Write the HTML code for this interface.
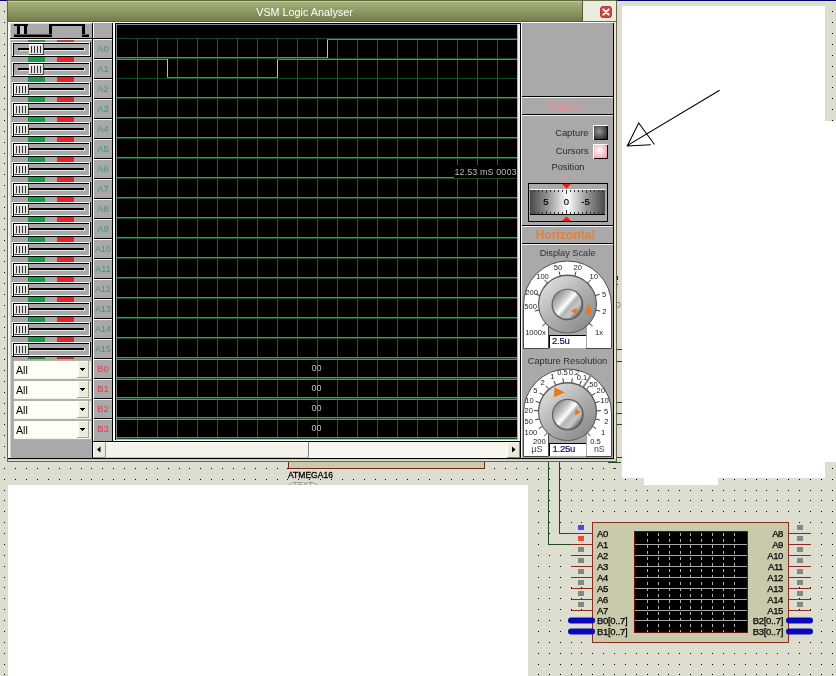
<!DOCTYPE html>
<html><head><meta charset="utf-8"><title>VSM Logic Analyser</title>
<style>
html,body{margin:0;padding:0;width:836px;height:676px;overflow:hidden;background:#DDDECF;}
svg{will-change:transform;display:block;position:absolute;left:0;top:0;font-family:"Liberation Sans",sans-serif;}
rect{shape-rendering:crispEdges}
</style></head><body>
<svg width="836" height="676" viewBox="0 0 836 676">
<path d="M4 11.5h1M832 11.5h1M4 22.5h1M832 22.5h1M4 33.5h1M832 33.5h1M4 44.5h1M832 44.5h1M4 55.5h1M832 55.5h1M4 66.5h1M832 66.5h1M4 76.5h1M832 76.5h1M4 87.5h1M832 87.5h1M4 98.5h1M832 98.5h1M4 109.5h1M832 109.5h1M4 120.5h1M832 120.5h1M4 131.5h1M832 131.5h1M4 142.5h1M832 142.5h1M4 153.5h1M832 153.5h1M4 163.5h1M832 163.5h1M4 174.5h1M832 174.5h1M4 185.5h1M832 185.5h1M4 196.5h1M832 196.5h1M4 207.5h1M832 207.5h1M4 218.5h1M832 218.5h1M4 229.5h1M832 229.5h1M4 240.5h1M832 240.5h1M4 250.5h1M832 250.5h1M4 261.5h1M832 261.5h1M4 272.5h1M832 272.5h1M4 283.5h1M832 283.5h1M4 294.5h1M832 294.5h1M4 305.5h1M832 305.5h1M4 316.5h1M832 316.5h1M4 327.5h1M832 327.5h1M4 337.5h1M832 337.5h1M4 348.5h1M832 348.5h1M4 359.5h1M832 359.5h1M4 370.5h1M832 370.5h1M4 381.5h1M832 381.5h1M4 392.5h1M832 392.5h1M4 403.5h1M832 403.5h1M4 413.5h1M832 413.5h1M4 424.5h1M832 424.5h1M4 435.5h1M832 435.5h1M4 446.5h1M832 446.5h1M4 457.5h1M832 457.5h1M4 468.5h1M15 468.5h1M26 468.5h1M37 468.5h1M48 468.5h1M59 468.5h1M70 468.5h1M81 468.5h1M91 468.5h1M102 468.5h1M113 468.5h1M124 468.5h1M135 468.5h1M146 468.5h1M157 468.5h1M168 468.5h1M179 468.5h1M189 468.5h1M200 468.5h1M211 468.5h1M222 468.5h1M233 468.5h1M244 468.5h1M255 468.5h1M266 468.5h1M277 468.5h1M287 468.5h1M298 468.5h1M309 468.5h1M320 468.5h1M331 468.5h1M342 468.5h1M353 468.5h1M364 468.5h1M375 468.5h1M385 468.5h1M396 468.5h1M407 468.5h1M418 468.5h1M429 468.5h1M440 468.5h1M451 468.5h1M462 468.5h1M473 468.5h1M483 468.5h1M494 468.5h1M505 468.5h1M516 468.5h1M527 468.5h1M538 468.5h1M549 468.5h1M560 468.5h1M571 468.5h1M581 468.5h1M592 468.5h1M603 468.5h1M614 468.5h1M832 468.5h1M4 479.5h1M15 479.5h1M26 479.5h1M37 479.5h1M48 479.5h1M59 479.5h1M70 479.5h1M81 479.5h1M91 479.5h1M102 479.5h1M113 479.5h1M124 479.5h1M135 479.5h1M146 479.5h1M157 479.5h1M168 479.5h1M179 479.5h1M189 479.5h1M200 479.5h1M211 479.5h1M222 479.5h1M233 479.5h1M244 479.5h1M255 479.5h1M266 479.5h1M277 479.5h1M287 479.5h1M298 479.5h1M309 479.5h1M320 479.5h1M331 479.5h1M342 479.5h1M353 479.5h1M364 479.5h1M375 479.5h1M385 479.5h1M396 479.5h1M407 479.5h1M418 479.5h1M429 479.5h1M440 479.5h1M451 479.5h1M462 479.5h1M473 479.5h1M483 479.5h1M494 479.5h1M505 479.5h1M516 479.5h1M527 479.5h1M538 479.5h1M549 479.5h1M560 479.5h1M571 479.5h1M581 479.5h1M592 479.5h1M603 479.5h1M614 479.5h1M625 479.5h1M636 479.5h1M647 479.5h1M658 479.5h1M668 479.5h1M679 479.5h1M690 479.5h1M701 479.5h1M712 479.5h1M723 479.5h1M734 479.5h1M745 479.5h1M756 479.5h1M766 479.5h1M777 479.5h1M788 479.5h1M799 479.5h1M810 479.5h1M821 479.5h1M832 479.5h1M4 490.5h1M538 490.5h1M549 490.5h1M560 490.5h1M571 490.5h1M581 490.5h1M592 490.5h1M603 490.5h1M614 490.5h1M625 490.5h1M636 490.5h1M647 490.5h1M658 490.5h1M668 490.5h1M679 490.5h1M690 490.5h1M701 490.5h1M712 490.5h1M723 490.5h1M734 490.5h1M745 490.5h1M756 490.5h1M766 490.5h1M777 490.5h1M788 490.5h1M799 490.5h1M810 490.5h1M821 490.5h1M832 490.5h1M4 500.5h1M538 500.5h1M549 500.5h1M560 500.5h1M571 500.5h1M581 500.5h1M592 500.5h1M603 500.5h1M614 500.5h1M625 500.5h1M636 500.5h1M647 500.5h1M658 500.5h1M668 500.5h1M679 500.5h1M690 500.5h1M701 500.5h1M712 500.5h1M723 500.5h1M734 500.5h1M745 500.5h1M756 500.5h1M766 500.5h1M777 500.5h1M788 500.5h1M799 500.5h1M810 500.5h1M821 500.5h1M832 500.5h1M4 511.5h1M538 511.5h1M549 511.5h1M560 511.5h1M571 511.5h1M581 511.5h1M592 511.5h1M603 511.5h1M614 511.5h1M625 511.5h1M636 511.5h1M647 511.5h1M658 511.5h1M668 511.5h1M679 511.5h1M690 511.5h1M701 511.5h1M712 511.5h1M723 511.5h1M734 511.5h1M745 511.5h1M756 511.5h1M766 511.5h1M777 511.5h1M788 511.5h1M799 511.5h1M810 511.5h1M821 511.5h1M832 511.5h1M4 522.5h1M538 522.5h1M549 522.5h1M560 522.5h1M571 522.5h1M581 522.5h1M592 522.5h1M603 522.5h1M614 522.5h1M625 522.5h1M636 522.5h1M647 522.5h1M658 522.5h1M668 522.5h1M679 522.5h1M690 522.5h1M701 522.5h1M712 522.5h1M723 522.5h1M734 522.5h1M745 522.5h1M756 522.5h1M766 522.5h1M777 522.5h1M788 522.5h1M799 522.5h1M810 522.5h1M821 522.5h1M832 522.5h1M4 533.5h1M538 533.5h1M549 533.5h1M560 533.5h1M571 533.5h1M581 533.5h1M592 533.5h1M603 533.5h1M614 533.5h1M625 533.5h1M636 533.5h1M647 533.5h1M658 533.5h1M668 533.5h1M679 533.5h1M690 533.5h1M701 533.5h1M712 533.5h1M723 533.5h1M734 533.5h1M745 533.5h1M756 533.5h1M766 533.5h1M777 533.5h1M788 533.5h1M799 533.5h1M810 533.5h1M821 533.5h1M832 533.5h1M4 544.5h1M538 544.5h1M549 544.5h1M560 544.5h1M571 544.5h1M581 544.5h1M592 544.5h1M603 544.5h1M614 544.5h1M625 544.5h1M636 544.5h1M647 544.5h1M658 544.5h1M668 544.5h1M679 544.5h1M690 544.5h1M701 544.5h1M712 544.5h1M723 544.5h1M734 544.5h1M745 544.5h1M756 544.5h1M766 544.5h1M777 544.5h1M788 544.5h1M799 544.5h1M810 544.5h1M821 544.5h1M832 544.5h1M4 555.5h1M538 555.5h1M549 555.5h1M560 555.5h1M571 555.5h1M581 555.5h1M592 555.5h1M603 555.5h1M614 555.5h1M625 555.5h1M636 555.5h1M647 555.5h1M658 555.5h1M668 555.5h1M679 555.5h1M690 555.5h1M701 555.5h1M712 555.5h1M723 555.5h1M734 555.5h1M745 555.5h1M756 555.5h1M766 555.5h1M777 555.5h1M788 555.5h1M799 555.5h1M810 555.5h1M821 555.5h1M832 555.5h1M4 566.5h1M538 566.5h1M549 566.5h1M560 566.5h1M571 566.5h1M581 566.5h1M592 566.5h1M603 566.5h1M614 566.5h1M625 566.5h1M636 566.5h1M647 566.5h1M658 566.5h1M668 566.5h1M679 566.5h1M690 566.5h1M701 566.5h1M712 566.5h1M723 566.5h1M734 566.5h1M745 566.5h1M756 566.5h1M766 566.5h1M777 566.5h1M788 566.5h1M799 566.5h1M810 566.5h1M821 566.5h1M832 566.5h1M4 577.5h1M538 577.5h1M549 577.5h1M560 577.5h1M571 577.5h1M581 577.5h1M592 577.5h1M603 577.5h1M614 577.5h1M625 577.5h1M636 577.5h1M647 577.5h1M658 577.5h1M668 577.5h1M679 577.5h1M690 577.5h1M701 577.5h1M712 577.5h1M723 577.5h1M734 577.5h1M745 577.5h1M756 577.5h1M766 577.5h1M777 577.5h1M788 577.5h1M799 577.5h1M810 577.5h1M821 577.5h1M832 577.5h1M4 587.5h1M538 587.5h1M549 587.5h1M560 587.5h1M571 587.5h1M581 587.5h1M592 587.5h1M603 587.5h1M614 587.5h1M625 587.5h1M636 587.5h1M647 587.5h1M658 587.5h1M668 587.5h1M679 587.5h1M690 587.5h1M701 587.5h1M712 587.5h1M723 587.5h1M734 587.5h1M745 587.5h1M756 587.5h1M766 587.5h1M777 587.5h1M788 587.5h1M799 587.5h1M810 587.5h1M821 587.5h1M832 587.5h1M4 598.5h1M538 598.5h1M549 598.5h1M560 598.5h1M571 598.5h1M581 598.5h1M592 598.5h1M603 598.5h1M614 598.5h1M625 598.5h1M636 598.5h1M647 598.5h1M658 598.5h1M668 598.5h1M679 598.5h1M690 598.5h1M701 598.5h1M712 598.5h1M723 598.5h1M734 598.5h1M745 598.5h1M756 598.5h1M766 598.5h1M777 598.5h1M788 598.5h1M799 598.5h1M810 598.5h1M821 598.5h1M832 598.5h1M4 609.5h1M538 609.5h1M549 609.5h1M560 609.5h1M571 609.5h1M581 609.5h1M592 609.5h1M603 609.5h1M614 609.5h1M625 609.5h1M636 609.5h1M647 609.5h1M658 609.5h1M668 609.5h1M679 609.5h1M690 609.5h1M701 609.5h1M712 609.5h1M723 609.5h1M734 609.5h1M745 609.5h1M756 609.5h1M766 609.5h1M777 609.5h1M788 609.5h1M799 609.5h1M810 609.5h1M821 609.5h1M832 609.5h1M4 620.5h1M538 620.5h1M549 620.5h1M560 620.5h1M571 620.5h1M581 620.5h1M592 620.5h1M603 620.5h1M614 620.5h1M625 620.5h1M636 620.5h1M647 620.5h1M658 620.5h1M668 620.5h1M679 620.5h1M690 620.5h1M701 620.5h1M712 620.5h1M723 620.5h1M734 620.5h1M745 620.5h1M756 620.5h1M766 620.5h1M777 620.5h1M788 620.5h1M799 620.5h1M810 620.5h1M821 620.5h1M832 620.5h1M4 631.5h1M538 631.5h1M549 631.5h1M560 631.5h1M571 631.5h1M581 631.5h1M592 631.5h1M603 631.5h1M614 631.5h1M625 631.5h1M636 631.5h1M647 631.5h1M658 631.5h1M668 631.5h1M679 631.5h1M690 631.5h1M701 631.5h1M712 631.5h1M723 631.5h1M734 631.5h1M745 631.5h1M756 631.5h1M766 631.5h1M777 631.5h1M788 631.5h1M799 631.5h1M810 631.5h1M821 631.5h1M832 631.5h1M4 642.5h1M538 642.5h1M549 642.5h1M560 642.5h1M571 642.5h1M581 642.5h1M592 642.5h1M603 642.5h1M614 642.5h1M625 642.5h1M636 642.5h1M647 642.5h1M658 642.5h1M668 642.5h1M679 642.5h1M690 642.5h1M701 642.5h1M712 642.5h1M723 642.5h1M734 642.5h1M745 642.5h1M756 642.5h1M766 642.5h1M777 642.5h1M788 642.5h1M799 642.5h1M810 642.5h1M821 642.5h1M832 642.5h1M4 653.5h1M538 653.5h1M549 653.5h1M560 653.5h1M571 653.5h1M581 653.5h1M592 653.5h1M603 653.5h1M614 653.5h1M625 653.5h1M636 653.5h1M647 653.5h1M658 653.5h1M668 653.5h1M679 653.5h1M690 653.5h1M701 653.5h1M712 653.5h1M723 653.5h1M734 653.5h1M745 653.5h1M756 653.5h1M766 653.5h1M777 653.5h1M788 653.5h1M799 653.5h1M810 653.5h1M821 653.5h1M832 653.5h1M4 664.5h1M538 664.5h1M549 664.5h1M560 664.5h1M571 664.5h1M581 664.5h1M592 664.5h1M603 664.5h1M614 664.5h1M625 664.5h1M636 664.5h1M647 664.5h1M658 664.5h1M668 664.5h1M679 664.5h1M690 664.5h1M701 664.5h1M712 664.5h1M723 664.5h1M734 664.5h1M745 664.5h1M756 664.5h1M766 664.5h1M777 664.5h1M788 664.5h1M799 664.5h1M810 664.5h1M821 664.5h1M832 664.5h1M4 674.5h1M538 674.5h1M549 674.5h1M560 674.5h1M571 674.5h1M581 674.5h1M592 674.5h1M603 674.5h1M614 674.5h1M625 674.5h1M636 674.5h1M647 674.5h1M658 674.5h1M668 674.5h1M679 674.5h1M690 674.5h1M701 674.5h1M712 674.5h1M723 674.5h1M734 674.5h1M745 674.5h1M756 674.5h1M766 674.5h1M777 674.5h1M788 674.5h1M799 674.5h1M810 674.5h1M821 674.5h1M832 674.5h1" stroke="#000" stroke-width="1" shape-rendering="crispEdges" fill="none"/>
<rect x="0" y="0" width="7" height="1" fill="#000068"/>
<rect x="0" y="1" width="7" height="1" fill="#D8D8FF"/>
<rect x="617" y="0" width="219" height="1" fill="#000068"/>
<rect x="617" y="1" width="219" height="1" fill="#DCDCFF"/>
<rect x="617" y="2" width="219" height="4" fill="#DCDFD0"/>
<rect x="288" y="440" width="197" height="29" fill="#7A2318"/>
<rect x="289" y="440" width="195" height="28" fill="#CACAAC"/>
<text x="288" y="478" font-size="9.3" fill="#000" stroke="#000" stroke-width="0.3" textLength="45" lengthAdjust="spacingAndGlyphs">ATMEGA16</text>
<text x="288" y="488" font-size="9" fill="#8A8A8A" textLength="30" lengthAdjust="spacingAndGlyphs">&lt;TEXT&gt;</text>
<rect x="548" y="462" width="1" height="83" fill="#1E4A1E"/>
<rect x="548" y="544" width="23" height="1" fill="#1E4A1E"/>
<rect x="559" y="462" width="1" height="72" fill="#1E4A1E"/>
<rect x="559" y="533" width="12" height="1" fill="#1E4A1E"/>
<rect x="608" y="462" width="13" height="1" fill="#1E4A1E"/>
<rect x="617" y="457" width="5" height="1" fill="#1E4A1E"/>
<rect x="617" y="402" width="5" height="1" fill="#1E4A1E"/>
<rect x="617" y="413" width="5" height="1" fill="#1E4A1E"/>
<rect x="617" y="424" width="5" height="1" fill="#1E4A1E"/>
<rect x="617" y="349" width="5" height="1" fill="#1E4A1E"/>
<rect x="617" y="361" width="5" height="1" fill="#1E4A1E"/>
<path d="M617 302.5H619.5Q621.5 304.7 619.5 307H617" stroke="#8A8A80" stroke-width="1" fill="none"/>
<rect x="613" y="468" width="3" height="1" fill="#333"/>
<rect x="617" y="276" width="1" height="4" fill="#222"/>
<rect x="617" y="284" width="1" height="1" fill="#222"/>
<rect x="592" y="522" width="197" height="121" fill="#8B2A20"/>
<rect x="593" y="523" width="195" height="119" fill="#C9C9AC"/>
<rect x="634" y="531" width="114" height="102" fill="#6A1010"/>
<rect x="635" y="532" width="112" height="100" fill="#000"/>
<rect x="635" y="544" width="112" height="1" fill="#A8A8A8"/>
<rect x="635" y="555" width="112" height="1" fill="#A8A8A8"/>
<rect x="635" y="566" width="112" height="1" fill="#A8A8A8"/>
<rect x="635" y="577" width="112" height="1" fill="#A8A8A8"/>
<rect x="635" y="588" width="112" height="1" fill="#A8A8A8"/>
<rect x="635" y="599" width="112" height="1" fill="#A8A8A8"/>
<rect x="635" y="610" width="112" height="1" fill="#A8A8A8"/>
<rect x="635" y="620" width="112" height="1" fill="#A8A8A8"/>
<path d="M647.5 533V632" stroke="#B0B0B0" stroke-width="1" stroke-dasharray="3 3.07" shape-rendering="crispEdges"/>
<path d="M658.5 533V632" stroke="#B0B0B0" stroke-width="1" stroke-dasharray="3 3.07" shape-rendering="crispEdges"/>
<path d="M669.5 533V632" stroke="#B0B0B0" stroke-width="1" stroke-dasharray="3 3.07" shape-rendering="crispEdges"/>
<path d="M680.5 533V632" stroke="#B0B0B0" stroke-width="1" stroke-dasharray="3 3.07" shape-rendering="crispEdges"/>
<path d="M690.5 533V632" stroke="#B0B0B0" stroke-width="1" stroke-dasharray="3 3.07" shape-rendering="crispEdges"/>
<path d="M701.5 533V632" stroke="#B0B0B0" stroke-width="1" stroke-dasharray="3 3.07" shape-rendering="crispEdges"/>
<path d="M712.5 533V632" stroke="#B0B0B0" stroke-width="1" stroke-dasharray="3 3.07" shape-rendering="crispEdges"/>
<path d="M723.5 533V632" stroke="#B0B0B0" stroke-width="1" stroke-dasharray="3 3.07" shape-rendering="crispEdges"/>
<path d="M734.5 533V632" stroke="#B0B0B0" stroke-width="1" stroke-dasharray="3 3.07" shape-rendering="crispEdges"/>
<rect x="571" y="533" width="21" height="1" fill="#8B2A20"/>
<rect x="789" y="533" width="22" height="1" fill="#8B2A20"/>
<rect x="578" y="525" width="6" height="5" fill="#4A4AF0"/>
<rect x="797" y="525" width="6" height="5" fill="#868686"/>
<text x="597" y="537" font-size="9.5" fill="#000" letter-spacing="-0.4" stroke="#000" stroke-width="0.25">A0</text>
<text x="783" y="537" font-size="9.5" fill="#000" text-anchor="end" letter-spacing="-0.4" stroke="#000" stroke-width="0.25">A8</text>
<rect x="571" y="544" width="21" height="1" fill="#8B2A20"/>
<rect x="789" y="544" width="22" height="1" fill="#8B2A20"/>
<rect x="578" y="536" width="6" height="5" fill="#F04A40"/>
<rect x="797" y="536" width="6" height="5" fill="#868686"/>
<text x="597" y="548" font-size="9.5" fill="#000" letter-spacing="-0.4" stroke="#000" stroke-width="0.25">A1</text>
<text x="783" y="548" font-size="9.5" fill="#000" text-anchor="end" letter-spacing="-0.4" stroke="#000" stroke-width="0.25">A9</text>
<rect x="571" y="555" width="21" height="1" fill="#8B2A20"/>
<rect x="789" y="555" width="22" height="1" fill="#8B2A20"/>
<rect x="578" y="547" width="6" height="5" fill="#868686"/>
<rect x="797" y="547" width="6" height="5" fill="#868686"/>
<text x="597" y="559" font-size="9.5" fill="#000" letter-spacing="-0.4" stroke="#000" stroke-width="0.25">A2</text>
<text x="783" y="559" font-size="9.5" fill="#000" text-anchor="end" letter-spacing="-0.4" stroke="#000" stroke-width="0.25">A10</text>
<rect x="571" y="566" width="21" height="1" fill="#8B2A20"/>
<rect x="789" y="566" width="22" height="1" fill="#8B2A20"/>
<rect x="578" y="558" width="6" height="5" fill="#868686"/>
<rect x="797" y="558" width="6" height="5" fill="#868686"/>
<text x="597" y="570" font-size="9.5" fill="#000" letter-spacing="-0.4" stroke="#000" stroke-width="0.25">A3</text>
<text x="783" y="570" font-size="9.5" fill="#000" text-anchor="end" letter-spacing="-0.4" stroke="#000" stroke-width="0.25">A11</text>
<rect x="571" y="577" width="21" height="1" fill="#8B2A20"/>
<rect x="789" y="577" width="22" height="1" fill="#8B2A20"/>
<rect x="578" y="569" width="6" height="5" fill="#868686"/>
<rect x="797" y="569" width="6" height="5" fill="#868686"/>
<text x="597" y="581" font-size="9.5" fill="#000" letter-spacing="-0.4" stroke="#000" stroke-width="0.25">A4</text>
<text x="783" y="581" font-size="9.5" fill="#000" text-anchor="end" letter-spacing="-0.4" stroke="#000" stroke-width="0.25">A12</text>
<rect x="571" y="588" width="21" height="1" fill="#8B2A20"/>
<rect x="789" y="588" width="22" height="1" fill="#8B2A20"/>
<rect x="578" y="580" width="6" height="5" fill="#868686"/>
<rect x="797" y="580" width="6" height="5" fill="#868686"/>
<text x="597" y="592" font-size="9.5" fill="#000" letter-spacing="-0.4" stroke="#000" stroke-width="0.25">A5</text>
<text x="783" y="592" font-size="9.5" fill="#000" text-anchor="end" letter-spacing="-0.4" stroke="#000" stroke-width="0.25">A13</text>
<rect x="571" y="599" width="21" height="1" fill="#8B2A20"/>
<rect x="789" y="599" width="22" height="1" fill="#8B2A20"/>
<rect x="578" y="591" width="6" height="5" fill="#868686"/>
<rect x="797" y="591" width="6" height="5" fill="#868686"/>
<text x="597" y="603" font-size="9.5" fill="#000" letter-spacing="-0.4" stroke="#000" stroke-width="0.25">A6</text>
<text x="783" y="603" font-size="9.5" fill="#000" text-anchor="end" letter-spacing="-0.4" stroke="#000" stroke-width="0.25">A14</text>
<rect x="571" y="610" width="21" height="1" fill="#8B2A20"/>
<rect x="789" y="610" width="22" height="1" fill="#8B2A20"/>
<rect x="578" y="602" width="6" height="5" fill="#868686"/>
<rect x="797" y="602" width="6" height="5" fill="#868686"/>
<text x="597" y="614" font-size="9.5" fill="#000" letter-spacing="-0.4" stroke="#000" stroke-width="0.25">A7</text>
<text x="783" y="614" font-size="9.5" fill="#000" text-anchor="end" letter-spacing="-0.4" stroke="#000" stroke-width="0.25">A15</text>
<path d="M571 620.5H592" stroke="#0808B8" stroke-width="6" stroke-linecap="round"/>
<path d="M789 620.5H810" stroke="#0808B8" stroke-width="6" stroke-linecap="round"/>
<text x="597" y="624" font-size="9.5" fill="#000" letter-spacing="-0.3" stroke="#000" stroke-width="0.25">B0[0..7]</text>
<text x="783" y="624" font-size="9.5" fill="#000" text-anchor="end" letter-spacing="-0.3" stroke="#000" stroke-width="0.25">B2[0..7]</text>
<path d="M571 631.5H592" stroke="#0808B8" stroke-width="6" stroke-linecap="round"/>
<path d="M789 631.5H810" stroke="#0808B8" stroke-width="6" stroke-linecap="round"/>
<text x="597" y="635" font-size="9.5" fill="#000" letter-spacing="-0.3" stroke="#000" stroke-width="0.25">B1[0..7]</text>
<text x="783" y="635" font-size="9.5" fill="#000" text-anchor="end" letter-spacing="-0.3" stroke="#000" stroke-width="0.25">B3[0..7]</text>
<path d="M622 6H825V121H836V462H825V478H718V485H644V478H622Z" fill="#fff"/>
<rect x="8" y="485" width="520" height="191" fill="#fff"/>
<path d="M719.6 90.3L627.5 145.5L638.7 123L654.5 144.5M627.5 146L650.7 144.8" stroke="#000" stroke-width="1.05" fill="none"/>
<rect x="7" y="0" width="610" height="462" fill="#66664E"/>
<rect x="8" y="0" width="608" height="461" fill="#F6F5EF"/>
<rect x="8" y="458" width="606" height="1" fill="#000"/>
<rect x="613" y="22" width="1" height="437" fill="#000"/>
<rect x="8" y="459" width="608" height="1" fill="#C6C6BA"/>
<rect x="8" y="460" width="608" height="1" fill="#DCDCD0"/>
<rect x="614" y="22" width="2" height="437" fill="#E6E4D6"/>
<defs><linearGradient id="tg" x1="0" y1="0" x2="0" y2="1"><stop offset="0" stop-color="#5E6B38"/><stop offset="0.045" stop-color="#5E6B38"/><stop offset="0.046" stop-color="#C3CC9E"/><stop offset="0.09" stop-color="#C3CC9E"/><stop offset="0.091" stop-color="#A4B07B"/><stop offset="0.5" stop-color="#8D9B63"/><stop offset="0.95" stop-color="#71804A"/><stop offset="0.955" stop-color="#59633A"/><stop offset="1" stop-color="#59633A"/></linearGradient></defs>
<rect x="8" y="0" width="575" height="22" fill="url(#tg)"/>
<rect x="7" y="0" width="1" height="22" fill="#5A6340"/>
<rect x="582" y="1" width="1" height="21" fill="#555C3C"/>
<rect x="583" y="0" width="34" height="1" fill="#6A7048"/>
<rect x="583" y="1" width="33" height="20" fill="#ECEBDF"/>
<rect x="583" y="21" width="33" height="1" fill="#6C6C5C"/>
<rect x="616" y="0" width="1" height="22" fill="#5F6348"/>
<text x="304.5" y="15.5" font-size="10.8" fill="#fff" text-anchor="middle">VSM Logic Analyser</text>
<rect x="600.5" y="6.5" width="11" height="11" rx="2.5" fill="#CC463E" stroke="#B03A34" stroke-width="1" style="shape-rendering:auto"/>
<path d="M603.3 9.3L608.7 14.7M608.7 9.3L603.3 14.7" stroke="#fff" stroke-width="1.9" stroke-linecap="round"/>
<rect x="8" y="22" width="606" height="1" fill="#fff"/>
<rect x="10" y="23" width="1" height="435" fill="#D0D0D0"/>
<rect x="11" y="23" width="81" height="435" fill="#A9A9A9"/>
<rect x="11" y="23" width="81" height="1" fill="#DADADA"/>
<rect x="92" y="23" width="1" height="435" fill="#000"/>
<rect x="93" y="23" width="1" height="418" fill="#fff"/>
<rect x="94" y="23" width="18" height="418" fill="#A9A9A9"/>
<rect x="112" y="23" width="1" height="418" fill="#000"/>
<rect x="113" y="23" width="2" height="418" fill="#fff"/>
<rect x="14" y="24" width="14" height="2" fill="#000"/>
<rect x="17" y="24" width="3" height="13" fill="#000"/>
<rect x="24" y="24" width="3" height="13" fill="#000"/>
<rect x="14" y="35" width="38" height="2" fill="#000"/>
<rect x="49" y="24" width="3" height="13" fill="#000"/>
<rect x="49" y="24" width="36" height="2" fill="#000"/>
<rect x="82" y="24" width="3" height="13" fill="#000"/>
<rect x="82" y="35" width="7" height="2" fill="#000"/>
<rect x="14" y="34" width="38" height="1" fill="#5A5A5A"/>
<rect x="82" y="34" width="7" height="1" fill="#5A5A5A"/>
<rect x="20" y="26" width="4" height="8" fill="#C6C6C6"/>
<rect x="10" y="38" width="103" height="1" fill="#000"/>
<rect x="10" y="39" width="82" height="1" fill="#fff"/>
<rect x="28" y="40" width="17" height="2" fill="#3A8A52"/>
<rect x="57" y="40" width="17" height="2" fill="#C84038"/>
<rect x="12" y="42" width="79" height="1" fill="#F2F2F2"/>
<rect x="12" y="42" width="1" height="15" fill="#F2F2F2"/>
<rect x="90" y="42" width="1" height="15" fill="#000"/>
<rect x="12" y="56" width="79" height="1" fill="#000"/>
<rect x="13" y="43" width="76" height="1" fill="#000"/>
<rect x="13" y="43" width="1" height="13" fill="#000"/>
<rect x="14" y="55" width="76" height="1" fill="#fff"/>
<rect x="89" y="43" width="1" height="13" fill="#fff"/>
<rect x="28" y="57" width="17" height="5" fill="#12A046"/>
<rect x="57" y="57" width="17" height="5" fill="#EE2222"/>
<rect x="18" y="48" width="66" height="2" fill="#000"/>
<rect x="19" y="50" width="66" height="1" fill="#E6E6E6"/>
<rect x="84" y="48" width="1" height="2" fill="#E6E6E6"/>
<rect x="29" y="44" width="15" height="11" fill="#E2E2E2"/>
<rect x="29" y="44" width="15" height="1" fill="#fff"/>
<rect x="29" y="44" width="1" height="11" fill="#fff"/>
<rect x="43" y="44" width="1" height="11" fill="#444"/>
<rect x="29" y="54" width="15" height="1" fill="#444"/>
<rect x="31" y="46" width="1" height="7" fill="#333"/>
<rect x="34" y="46" width="1" height="7" fill="#333"/>
<rect x="37" y="46" width="1" height="7" fill="#333"/>
<rect x="40" y="46" width="1" height="7" fill="#333"/>
<rect x="12" y="62" width="79" height="1" fill="#F2F2F2"/>
<rect x="12" y="62" width="1" height="15" fill="#F2F2F2"/>
<rect x="90" y="62" width="1" height="15" fill="#000"/>
<rect x="12" y="76" width="79" height="1" fill="#000"/>
<rect x="13" y="63" width="76" height="1" fill="#000"/>
<rect x="13" y="63" width="1" height="13" fill="#000"/>
<rect x="14" y="75" width="76" height="1" fill="#fff"/>
<rect x="89" y="63" width="1" height="13" fill="#fff"/>
<rect x="28" y="77" width="17" height="5" fill="#12A046"/>
<rect x="57" y="77" width="17" height="5" fill="#EE2222"/>
<rect x="18" y="68" width="66" height="2" fill="#000"/>
<rect x="19" y="70" width="66" height="1" fill="#E6E6E6"/>
<rect x="84" y="68" width="1" height="2" fill="#E6E6E6"/>
<rect x="29" y="64" width="15" height="11" fill="#E2E2E2"/>
<rect x="29" y="64" width="15" height="1" fill="#fff"/>
<rect x="29" y="64" width="1" height="11" fill="#fff"/>
<rect x="43" y="64" width="1" height="11" fill="#444"/>
<rect x="29" y="74" width="15" height="1" fill="#444"/>
<rect x="31" y="66" width="1" height="7" fill="#333"/>
<rect x="34" y="66" width="1" height="7" fill="#333"/>
<rect x="37" y="66" width="1" height="7" fill="#333"/>
<rect x="40" y="66" width="1" height="7" fill="#333"/>
<rect x="12" y="82" width="79" height="1" fill="#F2F2F2"/>
<rect x="12" y="82" width="1" height="15" fill="#F2F2F2"/>
<rect x="90" y="82" width="1" height="15" fill="#000"/>
<rect x="12" y="96" width="79" height="1" fill="#000"/>
<rect x="13" y="83" width="76" height="1" fill="#000"/>
<rect x="13" y="83" width="1" height="13" fill="#000"/>
<rect x="14" y="95" width="76" height="1" fill="#fff"/>
<rect x="89" y="83" width="1" height="13" fill="#fff"/>
<rect x="28" y="97" width="17" height="5" fill="#12A046"/>
<rect x="57" y="97" width="17" height="5" fill="#EE2222"/>
<rect x="18" y="88" width="66" height="2" fill="#000"/>
<rect x="19" y="90" width="66" height="1" fill="#E6E6E6"/>
<rect x="84" y="88" width="1" height="2" fill="#E6E6E6"/>
<rect x="14" y="84" width="15" height="11" fill="#E2E2E2"/>
<rect x="14" y="84" width="15" height="1" fill="#fff"/>
<rect x="14" y="84" width="1" height="11" fill="#fff"/>
<rect x="28" y="84" width="1" height="11" fill="#444"/>
<rect x="14" y="94" width="15" height="1" fill="#444"/>
<rect x="16" y="86" width="1" height="7" fill="#333"/>
<rect x="19" y="86" width="1" height="7" fill="#333"/>
<rect x="22" y="86" width="1" height="7" fill="#333"/>
<rect x="25" y="86" width="1" height="7" fill="#333"/>
<rect x="12" y="102" width="79" height="1" fill="#F2F2F2"/>
<rect x="12" y="102" width="1" height="15" fill="#F2F2F2"/>
<rect x="90" y="102" width="1" height="15" fill="#000"/>
<rect x="12" y="116" width="79" height="1" fill="#000"/>
<rect x="13" y="103" width="76" height="1" fill="#000"/>
<rect x="13" y="103" width="1" height="13" fill="#000"/>
<rect x="14" y="115" width="76" height="1" fill="#fff"/>
<rect x="89" y="103" width="1" height="13" fill="#fff"/>
<rect x="28" y="117" width="17" height="5" fill="#12A046"/>
<rect x="57" y="117" width="17" height="5" fill="#EE2222"/>
<rect x="18" y="108" width="66" height="2" fill="#000"/>
<rect x="19" y="110" width="66" height="1" fill="#E6E6E6"/>
<rect x="84" y="108" width="1" height="2" fill="#E6E6E6"/>
<rect x="14" y="104" width="15" height="11" fill="#E2E2E2"/>
<rect x="14" y="104" width="15" height="1" fill="#fff"/>
<rect x="14" y="104" width="1" height="11" fill="#fff"/>
<rect x="28" y="104" width="1" height="11" fill="#444"/>
<rect x="14" y="114" width="15" height="1" fill="#444"/>
<rect x="16" y="106" width="1" height="7" fill="#333"/>
<rect x="19" y="106" width="1" height="7" fill="#333"/>
<rect x="22" y="106" width="1" height="7" fill="#333"/>
<rect x="25" y="106" width="1" height="7" fill="#333"/>
<rect x="12" y="122" width="79" height="1" fill="#F2F2F2"/>
<rect x="12" y="122" width="1" height="15" fill="#F2F2F2"/>
<rect x="90" y="122" width="1" height="15" fill="#000"/>
<rect x="12" y="136" width="79" height="1" fill="#000"/>
<rect x="13" y="123" width="76" height="1" fill="#000"/>
<rect x="13" y="123" width="1" height="13" fill="#000"/>
<rect x="14" y="135" width="76" height="1" fill="#fff"/>
<rect x="89" y="123" width="1" height="13" fill="#fff"/>
<rect x="28" y="137" width="17" height="5" fill="#12A046"/>
<rect x="57" y="137" width="17" height="5" fill="#EE2222"/>
<rect x="18" y="128" width="66" height="2" fill="#000"/>
<rect x="19" y="130" width="66" height="1" fill="#E6E6E6"/>
<rect x="84" y="128" width="1" height="2" fill="#E6E6E6"/>
<rect x="14" y="124" width="15" height="11" fill="#E2E2E2"/>
<rect x="14" y="124" width="15" height="1" fill="#fff"/>
<rect x="14" y="124" width="1" height="11" fill="#fff"/>
<rect x="28" y="124" width="1" height="11" fill="#444"/>
<rect x="14" y="134" width="15" height="1" fill="#444"/>
<rect x="16" y="126" width="1" height="7" fill="#333"/>
<rect x="19" y="126" width="1" height="7" fill="#333"/>
<rect x="22" y="126" width="1" height="7" fill="#333"/>
<rect x="25" y="126" width="1" height="7" fill="#333"/>
<rect x="12" y="142" width="79" height="1" fill="#F2F2F2"/>
<rect x="12" y="142" width="1" height="15" fill="#F2F2F2"/>
<rect x="90" y="142" width="1" height="15" fill="#000"/>
<rect x="12" y="156" width="79" height="1" fill="#000"/>
<rect x="13" y="143" width="76" height="1" fill="#000"/>
<rect x="13" y="143" width="1" height="13" fill="#000"/>
<rect x="14" y="155" width="76" height="1" fill="#fff"/>
<rect x="89" y="143" width="1" height="13" fill="#fff"/>
<rect x="28" y="157" width="17" height="5" fill="#12A046"/>
<rect x="57" y="157" width="17" height="5" fill="#EE2222"/>
<rect x="18" y="148" width="66" height="2" fill="#000"/>
<rect x="19" y="150" width="66" height="1" fill="#E6E6E6"/>
<rect x="84" y="148" width="1" height="2" fill="#E6E6E6"/>
<rect x="14" y="144" width="15" height="11" fill="#E2E2E2"/>
<rect x="14" y="144" width="15" height="1" fill="#fff"/>
<rect x="14" y="144" width="1" height="11" fill="#fff"/>
<rect x="28" y="144" width="1" height="11" fill="#444"/>
<rect x="14" y="154" width="15" height="1" fill="#444"/>
<rect x="16" y="146" width="1" height="7" fill="#333"/>
<rect x="19" y="146" width="1" height="7" fill="#333"/>
<rect x="22" y="146" width="1" height="7" fill="#333"/>
<rect x="25" y="146" width="1" height="7" fill="#333"/>
<rect x="12" y="162" width="79" height="1" fill="#F2F2F2"/>
<rect x="12" y="162" width="1" height="15" fill="#F2F2F2"/>
<rect x="90" y="162" width="1" height="15" fill="#000"/>
<rect x="12" y="176" width="79" height="1" fill="#000"/>
<rect x="13" y="163" width="76" height="1" fill="#000"/>
<rect x="13" y="163" width="1" height="13" fill="#000"/>
<rect x="14" y="175" width="76" height="1" fill="#fff"/>
<rect x="89" y="163" width="1" height="13" fill="#fff"/>
<rect x="28" y="177" width="17" height="5" fill="#12A046"/>
<rect x="57" y="177" width="17" height="5" fill="#EE2222"/>
<rect x="18" y="168" width="66" height="2" fill="#000"/>
<rect x="19" y="170" width="66" height="1" fill="#E6E6E6"/>
<rect x="84" y="168" width="1" height="2" fill="#E6E6E6"/>
<rect x="14" y="164" width="15" height="11" fill="#E2E2E2"/>
<rect x="14" y="164" width="15" height="1" fill="#fff"/>
<rect x="14" y="164" width="1" height="11" fill="#fff"/>
<rect x="28" y="164" width="1" height="11" fill="#444"/>
<rect x="14" y="174" width="15" height="1" fill="#444"/>
<rect x="16" y="166" width="1" height="7" fill="#333"/>
<rect x="19" y="166" width="1" height="7" fill="#333"/>
<rect x="22" y="166" width="1" height="7" fill="#333"/>
<rect x="25" y="166" width="1" height="7" fill="#333"/>
<rect x="12" y="182" width="79" height="1" fill="#F2F2F2"/>
<rect x="12" y="182" width="1" height="15" fill="#F2F2F2"/>
<rect x="90" y="182" width="1" height="15" fill="#000"/>
<rect x="12" y="196" width="79" height="1" fill="#000"/>
<rect x="13" y="183" width="76" height="1" fill="#000"/>
<rect x="13" y="183" width="1" height="13" fill="#000"/>
<rect x="14" y="195" width="76" height="1" fill="#fff"/>
<rect x="89" y="183" width="1" height="13" fill="#fff"/>
<rect x="28" y="197" width="17" height="5" fill="#12A046"/>
<rect x="57" y="197" width="17" height="5" fill="#EE2222"/>
<rect x="18" y="188" width="66" height="2" fill="#000"/>
<rect x="19" y="190" width="66" height="1" fill="#E6E6E6"/>
<rect x="84" y="188" width="1" height="2" fill="#E6E6E6"/>
<rect x="14" y="184" width="15" height="11" fill="#E2E2E2"/>
<rect x="14" y="184" width="15" height="1" fill="#fff"/>
<rect x="14" y="184" width="1" height="11" fill="#fff"/>
<rect x="28" y="184" width="1" height="11" fill="#444"/>
<rect x="14" y="194" width="15" height="1" fill="#444"/>
<rect x="16" y="186" width="1" height="7" fill="#333"/>
<rect x="19" y="186" width="1" height="7" fill="#333"/>
<rect x="22" y="186" width="1" height="7" fill="#333"/>
<rect x="25" y="186" width="1" height="7" fill="#333"/>
<rect x="12" y="202" width="79" height="1" fill="#F2F2F2"/>
<rect x="12" y="202" width="1" height="15" fill="#F2F2F2"/>
<rect x="90" y="202" width="1" height="15" fill="#000"/>
<rect x="12" y="216" width="79" height="1" fill="#000"/>
<rect x="13" y="203" width="76" height="1" fill="#000"/>
<rect x="13" y="203" width="1" height="13" fill="#000"/>
<rect x="14" y="215" width="76" height="1" fill="#fff"/>
<rect x="89" y="203" width="1" height="13" fill="#fff"/>
<rect x="28" y="217" width="17" height="5" fill="#12A046"/>
<rect x="57" y="217" width="17" height="5" fill="#EE2222"/>
<rect x="18" y="208" width="66" height="2" fill="#000"/>
<rect x="19" y="210" width="66" height="1" fill="#E6E6E6"/>
<rect x="84" y="208" width="1" height="2" fill="#E6E6E6"/>
<rect x="14" y="204" width="15" height="11" fill="#E2E2E2"/>
<rect x="14" y="204" width="15" height="1" fill="#fff"/>
<rect x="14" y="204" width="1" height="11" fill="#fff"/>
<rect x="28" y="204" width="1" height="11" fill="#444"/>
<rect x="14" y="214" width="15" height="1" fill="#444"/>
<rect x="16" y="206" width="1" height="7" fill="#333"/>
<rect x="19" y="206" width="1" height="7" fill="#333"/>
<rect x="22" y="206" width="1" height="7" fill="#333"/>
<rect x="25" y="206" width="1" height="7" fill="#333"/>
<rect x="12" y="222" width="79" height="1" fill="#F2F2F2"/>
<rect x="12" y="222" width="1" height="15" fill="#F2F2F2"/>
<rect x="90" y="222" width="1" height="15" fill="#000"/>
<rect x="12" y="236" width="79" height="1" fill="#000"/>
<rect x="13" y="223" width="76" height="1" fill="#000"/>
<rect x="13" y="223" width="1" height="13" fill="#000"/>
<rect x="14" y="235" width="76" height="1" fill="#fff"/>
<rect x="89" y="223" width="1" height="13" fill="#fff"/>
<rect x="28" y="237" width="17" height="5" fill="#12A046"/>
<rect x="57" y="237" width="17" height="5" fill="#EE2222"/>
<rect x="18" y="228" width="66" height="2" fill="#000"/>
<rect x="19" y="230" width="66" height="1" fill="#E6E6E6"/>
<rect x="84" y="228" width="1" height="2" fill="#E6E6E6"/>
<rect x="14" y="224" width="15" height="11" fill="#E2E2E2"/>
<rect x="14" y="224" width="15" height="1" fill="#fff"/>
<rect x="14" y="224" width="1" height="11" fill="#fff"/>
<rect x="28" y="224" width="1" height="11" fill="#444"/>
<rect x="14" y="234" width="15" height="1" fill="#444"/>
<rect x="16" y="226" width="1" height="7" fill="#333"/>
<rect x="19" y="226" width="1" height="7" fill="#333"/>
<rect x="22" y="226" width="1" height="7" fill="#333"/>
<rect x="25" y="226" width="1" height="7" fill="#333"/>
<rect x="12" y="242" width="79" height="1" fill="#F2F2F2"/>
<rect x="12" y="242" width="1" height="15" fill="#F2F2F2"/>
<rect x="90" y="242" width="1" height="15" fill="#000"/>
<rect x="12" y="256" width="79" height="1" fill="#000"/>
<rect x="13" y="243" width="76" height="1" fill="#000"/>
<rect x="13" y="243" width="1" height="13" fill="#000"/>
<rect x="14" y="255" width="76" height="1" fill="#fff"/>
<rect x="89" y="243" width="1" height="13" fill="#fff"/>
<rect x="28" y="257" width="17" height="5" fill="#12A046"/>
<rect x="57" y="257" width="17" height="5" fill="#EE2222"/>
<rect x="18" y="248" width="66" height="2" fill="#000"/>
<rect x="19" y="250" width="66" height="1" fill="#E6E6E6"/>
<rect x="84" y="248" width="1" height="2" fill="#E6E6E6"/>
<rect x="14" y="244" width="15" height="11" fill="#E2E2E2"/>
<rect x="14" y="244" width="15" height="1" fill="#fff"/>
<rect x="14" y="244" width="1" height="11" fill="#fff"/>
<rect x="28" y="244" width="1" height="11" fill="#444"/>
<rect x="14" y="254" width="15" height="1" fill="#444"/>
<rect x="16" y="246" width="1" height="7" fill="#333"/>
<rect x="19" y="246" width="1" height="7" fill="#333"/>
<rect x="22" y="246" width="1" height="7" fill="#333"/>
<rect x="25" y="246" width="1" height="7" fill="#333"/>
<rect x="12" y="262" width="79" height="1" fill="#F2F2F2"/>
<rect x="12" y="262" width="1" height="15" fill="#F2F2F2"/>
<rect x="90" y="262" width="1" height="15" fill="#000"/>
<rect x="12" y="276" width="79" height="1" fill="#000"/>
<rect x="13" y="263" width="76" height="1" fill="#000"/>
<rect x="13" y="263" width="1" height="13" fill="#000"/>
<rect x="14" y="275" width="76" height="1" fill="#fff"/>
<rect x="89" y="263" width="1" height="13" fill="#fff"/>
<rect x="28" y="277" width="17" height="5" fill="#12A046"/>
<rect x="57" y="277" width="17" height="5" fill="#EE2222"/>
<rect x="18" y="268" width="66" height="2" fill="#000"/>
<rect x="19" y="270" width="66" height="1" fill="#E6E6E6"/>
<rect x="84" y="268" width="1" height="2" fill="#E6E6E6"/>
<rect x="14" y="264" width="15" height="11" fill="#E2E2E2"/>
<rect x="14" y="264" width="15" height="1" fill="#fff"/>
<rect x="14" y="264" width="1" height="11" fill="#fff"/>
<rect x="28" y="264" width="1" height="11" fill="#444"/>
<rect x="14" y="274" width="15" height="1" fill="#444"/>
<rect x="16" y="266" width="1" height="7" fill="#333"/>
<rect x="19" y="266" width="1" height="7" fill="#333"/>
<rect x="22" y="266" width="1" height="7" fill="#333"/>
<rect x="25" y="266" width="1" height="7" fill="#333"/>
<rect x="12" y="282" width="79" height="1" fill="#F2F2F2"/>
<rect x="12" y="282" width="1" height="15" fill="#F2F2F2"/>
<rect x="90" y="282" width="1" height="15" fill="#000"/>
<rect x="12" y="296" width="79" height="1" fill="#000"/>
<rect x="13" y="283" width="76" height="1" fill="#000"/>
<rect x="13" y="283" width="1" height="13" fill="#000"/>
<rect x="14" y="295" width="76" height="1" fill="#fff"/>
<rect x="89" y="283" width="1" height="13" fill="#fff"/>
<rect x="28" y="297" width="17" height="5" fill="#12A046"/>
<rect x="57" y="297" width="17" height="5" fill="#EE2222"/>
<rect x="18" y="288" width="66" height="2" fill="#000"/>
<rect x="19" y="290" width="66" height="1" fill="#E6E6E6"/>
<rect x="84" y="288" width="1" height="2" fill="#E6E6E6"/>
<rect x="14" y="284" width="15" height="11" fill="#E2E2E2"/>
<rect x="14" y="284" width="15" height="1" fill="#fff"/>
<rect x="14" y="284" width="1" height="11" fill="#fff"/>
<rect x="28" y="284" width="1" height="11" fill="#444"/>
<rect x="14" y="294" width="15" height="1" fill="#444"/>
<rect x="16" y="286" width="1" height="7" fill="#333"/>
<rect x="19" y="286" width="1" height="7" fill="#333"/>
<rect x="22" y="286" width="1" height="7" fill="#333"/>
<rect x="25" y="286" width="1" height="7" fill="#333"/>
<rect x="12" y="302" width="79" height="1" fill="#F2F2F2"/>
<rect x="12" y="302" width="1" height="15" fill="#F2F2F2"/>
<rect x="90" y="302" width="1" height="15" fill="#000"/>
<rect x="12" y="316" width="79" height="1" fill="#000"/>
<rect x="13" y="303" width="76" height="1" fill="#000"/>
<rect x="13" y="303" width="1" height="13" fill="#000"/>
<rect x="14" y="315" width="76" height="1" fill="#fff"/>
<rect x="89" y="303" width="1" height="13" fill="#fff"/>
<rect x="28" y="317" width="17" height="5" fill="#12A046"/>
<rect x="57" y="317" width="17" height="5" fill="#EE2222"/>
<rect x="18" y="308" width="66" height="2" fill="#000"/>
<rect x="19" y="310" width="66" height="1" fill="#E6E6E6"/>
<rect x="84" y="308" width="1" height="2" fill="#E6E6E6"/>
<rect x="14" y="304" width="15" height="11" fill="#E2E2E2"/>
<rect x="14" y="304" width="15" height="1" fill="#fff"/>
<rect x="14" y="304" width="1" height="11" fill="#fff"/>
<rect x="28" y="304" width="1" height="11" fill="#444"/>
<rect x="14" y="314" width="15" height="1" fill="#444"/>
<rect x="16" y="306" width="1" height="7" fill="#333"/>
<rect x="19" y="306" width="1" height="7" fill="#333"/>
<rect x="22" y="306" width="1" height="7" fill="#333"/>
<rect x="25" y="306" width="1" height="7" fill="#333"/>
<rect x="12" y="322" width="79" height="1" fill="#F2F2F2"/>
<rect x="12" y="322" width="1" height="15" fill="#F2F2F2"/>
<rect x="90" y="322" width="1" height="15" fill="#000"/>
<rect x="12" y="336" width="79" height="1" fill="#000"/>
<rect x="13" y="323" width="76" height="1" fill="#000"/>
<rect x="13" y="323" width="1" height="13" fill="#000"/>
<rect x="14" y="335" width="76" height="1" fill="#fff"/>
<rect x="89" y="323" width="1" height="13" fill="#fff"/>
<rect x="28" y="337" width="17" height="5" fill="#12A046"/>
<rect x="57" y="337" width="17" height="5" fill="#EE2222"/>
<rect x="18" y="328" width="66" height="2" fill="#000"/>
<rect x="19" y="330" width="66" height="1" fill="#E6E6E6"/>
<rect x="84" y="328" width="1" height="2" fill="#E6E6E6"/>
<rect x="14" y="324" width="15" height="11" fill="#E2E2E2"/>
<rect x="14" y="324" width="15" height="1" fill="#fff"/>
<rect x="14" y="324" width="1" height="11" fill="#fff"/>
<rect x="28" y="324" width="1" height="11" fill="#444"/>
<rect x="14" y="334" width="15" height="1" fill="#444"/>
<rect x="16" y="326" width="1" height="7" fill="#333"/>
<rect x="19" y="326" width="1" height="7" fill="#333"/>
<rect x="22" y="326" width="1" height="7" fill="#333"/>
<rect x="25" y="326" width="1" height="7" fill="#333"/>
<rect x="12" y="342" width="79" height="1" fill="#F2F2F2"/>
<rect x="12" y="342" width="1" height="15" fill="#F2F2F2"/>
<rect x="90" y="342" width="1" height="15" fill="#000"/>
<rect x="12" y="356" width="79" height="1" fill="#000"/>
<rect x="13" y="343" width="76" height="1" fill="#000"/>
<rect x="13" y="343" width="1" height="13" fill="#000"/>
<rect x="14" y="355" width="76" height="1" fill="#fff"/>
<rect x="89" y="343" width="1" height="13" fill="#fff"/>
<rect x="28" y="357" width="17" height="2" fill="#2A8A4A"/>
<rect x="57" y="357" width="17" height="2" fill="#D03030"/>
<rect x="18" y="348" width="66" height="2" fill="#000"/>
<rect x="19" y="350" width="66" height="1" fill="#E6E6E6"/>
<rect x="84" y="348" width="1" height="2" fill="#E6E6E6"/>
<rect x="14" y="344" width="15" height="11" fill="#E2E2E2"/>
<rect x="14" y="344" width="15" height="1" fill="#fff"/>
<rect x="14" y="344" width="1" height="11" fill="#fff"/>
<rect x="28" y="344" width="1" height="11" fill="#444"/>
<rect x="14" y="354" width="15" height="1" fill="#444"/>
<rect x="16" y="346" width="1" height="7" fill="#333"/>
<rect x="19" y="346" width="1" height="7" fill="#333"/>
<rect x="22" y="346" width="1" height="7" fill="#333"/>
<rect x="25" y="346" width="1" height="7" fill="#333"/>
<rect x="94" y="39" width="18" height="1" fill="#fff"/>
<rect x="94" y="58" width="18" height="1" fill="#000"/>
<text x="103" y="52" font-size="9.5" fill="#3C9A6A" text-anchor="middle">A0</text>
<rect x="94" y="59" width="18" height="1" fill="#fff"/>
<rect x="94" y="78" width="18" height="1" fill="#000"/>
<text x="103" y="72" font-size="9.5" fill="#3C9A6A" text-anchor="middle">A1</text>
<rect x="94" y="79" width="18" height="1" fill="#fff"/>
<rect x="94" y="98" width="18" height="1" fill="#000"/>
<text x="103" y="92" font-size="9.5" fill="#3C9A6A" text-anchor="middle">A2</text>
<rect x="94" y="99" width="18" height="1" fill="#fff"/>
<rect x="94" y="118" width="18" height="1" fill="#000"/>
<text x="103" y="112" font-size="9.5" fill="#3C9A6A" text-anchor="middle">A3</text>
<rect x="94" y="119" width="18" height="1" fill="#fff"/>
<rect x="94" y="138" width="18" height="1" fill="#000"/>
<text x="103" y="132" font-size="9.5" fill="#3C9A6A" text-anchor="middle">A4</text>
<rect x="94" y="139" width="18" height="1" fill="#fff"/>
<rect x="94" y="158" width="18" height="1" fill="#000"/>
<text x="103" y="152" font-size="9.5" fill="#3C9A6A" text-anchor="middle">A5</text>
<rect x="94" y="159" width="18" height="1" fill="#fff"/>
<rect x="94" y="178" width="18" height="1" fill="#000"/>
<text x="103" y="172" font-size="9.5" fill="#3C9A6A" text-anchor="middle">A6</text>
<rect x="94" y="179" width="18" height="1" fill="#fff"/>
<rect x="94" y="198" width="18" height="1" fill="#000"/>
<text x="103" y="192" font-size="9.5" fill="#3C9A6A" text-anchor="middle">A7</text>
<rect x="94" y="199" width="18" height="1" fill="#fff"/>
<rect x="94" y="218" width="18" height="1" fill="#000"/>
<text x="103" y="212" font-size="9.5" fill="#3C9A6A" text-anchor="middle">A8</text>
<rect x="94" y="219" width="18" height="1" fill="#fff"/>
<rect x="94" y="238" width="18" height="1" fill="#000"/>
<text x="103" y="232" font-size="9.5" fill="#3C9A6A" text-anchor="middle">A9</text>
<rect x="94" y="239" width="18" height="1" fill="#fff"/>
<rect x="94" y="258" width="18" height="1" fill="#000"/>
<text x="103" y="252" font-size="9.5" fill="#3C9A6A" text-anchor="middle" textLength="15.4" lengthAdjust="spacingAndGlyphs">A10</text>
<rect x="94" y="259" width="18" height="1" fill="#fff"/>
<rect x="94" y="278" width="18" height="1" fill="#000"/>
<text x="103" y="272" font-size="9.5" fill="#3C9A6A" text-anchor="middle" textLength="15.4" lengthAdjust="spacingAndGlyphs">A11</text>
<rect x="94" y="279" width="18" height="1" fill="#fff"/>
<rect x="94" y="298" width="18" height="1" fill="#000"/>
<text x="103" y="292" font-size="9.5" fill="#3C9A6A" text-anchor="middle" textLength="15.4" lengthAdjust="spacingAndGlyphs">A12</text>
<rect x="94" y="299" width="18" height="1" fill="#fff"/>
<rect x="94" y="318" width="18" height="1" fill="#000"/>
<text x="103" y="312" font-size="9.5" fill="#3C9A6A" text-anchor="middle" textLength="15.4" lengthAdjust="spacingAndGlyphs">A13</text>
<rect x="94" y="319" width="18" height="1" fill="#fff"/>
<rect x="94" y="338" width="18" height="1" fill="#000"/>
<text x="103" y="332" font-size="9.5" fill="#3C9A6A" text-anchor="middle" textLength="15.4" lengthAdjust="spacingAndGlyphs">A14</text>
<rect x="94" y="339" width="18" height="1" fill="#fff"/>
<rect x="94" y="358" width="18" height="1" fill="#000"/>
<text x="103" y="352" font-size="9.5" fill="#3C9A6A" text-anchor="middle" textLength="15.4" lengthAdjust="spacingAndGlyphs">A15</text>
<rect x="94" y="359" width="18" height="1" fill="#fff"/>
<rect x="94" y="378" width="18" height="1" fill="#000"/>
<text x="103" y="372" font-size="9.5" fill="#E63E4C" text-anchor="middle">B0</text>
<rect x="94" y="379" width="18" height="1" fill="#fff"/>
<rect x="94" y="398" width="18" height="1" fill="#000"/>
<text x="103" y="392" font-size="9.5" fill="#E63E4C" text-anchor="middle">B1</text>
<rect x="94" y="399" width="18" height="1" fill="#fff"/>
<rect x="94" y="418" width="18" height="1" fill="#000"/>
<text x="103" y="412" font-size="9.5" fill="#E63E4C" text-anchor="middle">B2</text>
<rect x="94" y="419" width="18" height="1" fill="#fff"/>
<text x="103" y="432" font-size="9.5" fill="#E63E4C" text-anchor="middle">B3</text>
<rect x="94" y="38" width="18" height="1" fill="#000"/>
<rect x="92" y="441" width="429" height="1" fill="#000"/>
<rect x="13" y="360" width="78" height="20" fill="#B2B0A0"/>
<rect x="14" y="361" width="75" height="17" fill="#FFFFF5"/>
<rect x="14" y="378" width="77" height="1" fill="#F2F2EA"/>
<rect x="89" y="361" width="2" height="18" fill="#F0F0E8"/>
<rect x="78" y="361" width="11" height="17" fill="#ECEADC"/>
<rect x="78" y="361" width="11" height="1" fill="#FBFBF3"/>
<rect x="78" y="361" width="1" height="17" fill="#FBFBF3"/>
<rect x="88" y="361" width="1" height="17" fill="#A6A494"/>
<rect x="77" y="377" width="12" height="1" fill="#A6A494"/>
<rect x="80" y="368" width="5" height="1" fill="#000"/>
<rect x="81" y="369" width="3" height="1" fill="#000"/>
<rect x="82" y="370" width="1" height="1" fill="#000"/>
<text x="16" y="374" font-size="10.6" fill="#000">All</text>
<rect x="13" y="380" width="78" height="20" fill="#B2B0A0"/>
<rect x="14" y="381" width="75" height="17" fill="#FFFFF5"/>
<rect x="14" y="398" width="77" height="1" fill="#F2F2EA"/>
<rect x="89" y="381" width="2" height="18" fill="#F0F0E8"/>
<rect x="78" y="381" width="11" height="17" fill="#ECEADC"/>
<rect x="78" y="381" width="11" height="1" fill="#FBFBF3"/>
<rect x="78" y="381" width="1" height="17" fill="#FBFBF3"/>
<rect x="88" y="381" width="1" height="17" fill="#A6A494"/>
<rect x="77" y="397" width="12" height="1" fill="#A6A494"/>
<rect x="80" y="388" width="5" height="1" fill="#000"/>
<rect x="81" y="389" width="3" height="1" fill="#000"/>
<rect x="82" y="390" width="1" height="1" fill="#000"/>
<text x="16" y="394" font-size="10.6" fill="#000">All</text>
<rect x="13" y="400" width="78" height="20" fill="#B2B0A0"/>
<rect x="14" y="401" width="75" height="17" fill="#FFFFF5"/>
<rect x="14" y="418" width="77" height="1" fill="#F2F2EA"/>
<rect x="89" y="401" width="2" height="18" fill="#F0F0E8"/>
<rect x="78" y="401" width="11" height="17" fill="#ECEADC"/>
<rect x="78" y="401" width="11" height="1" fill="#FBFBF3"/>
<rect x="78" y="401" width="1" height="17" fill="#FBFBF3"/>
<rect x="88" y="401" width="1" height="17" fill="#A6A494"/>
<rect x="77" y="417" width="12" height="1" fill="#A6A494"/>
<rect x="80" y="408" width="5" height="1" fill="#000"/>
<rect x="81" y="409" width="3" height="1" fill="#000"/>
<rect x="82" y="410" width="1" height="1" fill="#000"/>
<text x="16" y="414" font-size="10.6" fill="#000">All</text>
<rect x="13" y="420" width="78" height="20" fill="#B2B0A0"/>
<rect x="14" y="421" width="75" height="17" fill="#FFFFF5"/>
<rect x="14" y="438" width="77" height="1" fill="#F2F2EA"/>
<rect x="89" y="421" width="2" height="18" fill="#F0F0E8"/>
<rect x="78" y="421" width="11" height="17" fill="#ECEADC"/>
<rect x="78" y="421" width="11" height="1" fill="#FBFBF3"/>
<rect x="78" y="421" width="1" height="17" fill="#FBFBF3"/>
<rect x="88" y="421" width="1" height="17" fill="#A6A494"/>
<rect x="77" y="437" width="12" height="1" fill="#A6A494"/>
<rect x="80" y="428" width="5" height="1" fill="#000"/>
<rect x="81" y="429" width="3" height="1" fill="#000"/>
<rect x="82" y="430" width="1" height="1" fill="#000"/>
<text x="16" y="434" font-size="10.6" fill="#000">All</text>
<rect x="115" y="23" width="406" height="418" fill="#000"/>
<rect x="116" y="24" width="402" height="1" fill="#8C8C8C"/>
<rect x="116" y="24" width="1" height="416" fill="#8C8C8C"/>
<rect x="517" y="24" width="1" height="416" fill="#B0B0B0"/>
<rect x="116" y="439" width="402" height="1" fill="#B0B0B0"/>
<rect x="518" y="24" width="2" height="417" fill="#EDEDED"/>
<rect x="115" y="440" width="405" height="1" fill="#F4F4F4"/>
<rect x="117" y="25" width="400" height="414" fill="#000"/>
<rect x="521" y="23" width="1" height="435" fill="#fff"/>
<rect x="137" y="39" width="1" height="400" fill="#1E6034"/>
<rect x="157" y="39" width="1" height="400" fill="#1E6034"/>
<rect x="177" y="39" width="1" height="400" fill="#1E6034"/>
<rect x="197" y="39" width="1" height="400" fill="#1E6034"/>
<rect x="217" y="39" width="1" height="400" fill="#1E6034"/>
<rect x="237" y="39" width="1" height="400" fill="#1E6034"/>
<rect x="257" y="39" width="1" height="400" fill="#1E6034"/>
<rect x="277" y="39" width="1" height="400" fill="#1E6034"/>
<rect x="297" y="39" width="1" height="400" fill="#1E6034"/>
<rect x="317" y="39" width="1" height="400" fill="#1E6034"/>
<rect x="337" y="39" width="1" height="400" fill="#1E6034"/>
<rect x="357" y="39" width="1" height="400" fill="#1E6034"/>
<rect x="377" y="39" width="1" height="400" fill="#1E6034"/>
<rect x="397" y="39" width="1" height="400" fill="#1E6034"/>
<rect x="417" y="39" width="1" height="400" fill="#1E6034"/>
<rect x="437" y="39" width="1" height="400" fill="#1E6034"/>
<rect x="457" y="39" width="1" height="400" fill="#1E6034"/>
<rect x="477" y="39" width="1" height="400" fill="#1E6034"/>
<rect x="497" y="39" width="1" height="400" fill="#1E6034"/>
<rect x="117" y="38" width="400" height="1" fill="#124C22"/>
<rect x="117" y="58" width="400" height="1" fill="#124C22"/>
<rect x="117" y="78" width="400" height="1" fill="#124C22"/>
<rect x="117" y="98" width="400" height="1" fill="#124C22"/>
<rect x="117" y="118" width="400" height="1" fill="#124C22"/>
<rect x="117" y="138" width="400" height="1" fill="#124C22"/>
<rect x="117" y="158" width="400" height="1" fill="#124C22"/>
<rect x="117" y="178" width="400" height="1" fill="#124C22"/>
<rect x="117" y="198" width="400" height="1" fill="#124C22"/>
<rect x="117" y="218" width="400" height="1" fill="#124C22"/>
<rect x="117" y="238" width="400" height="1" fill="#124C22"/>
<rect x="117" y="258" width="400" height="1" fill="#124C22"/>
<rect x="117" y="278" width="400" height="1" fill="#124C22"/>
<rect x="117" y="298" width="400" height="1" fill="#124C22"/>
<rect x="117" y="318" width="400" height="1" fill="#124C22"/>
<rect x="117" y="338" width="400" height="1" fill="#124C22"/>
<rect x="117" y="358" width="400" height="1" fill="#124C22"/>
<rect x="117" y="378" width="400" height="1" fill="#124C22"/>
<rect x="117" y="398" width="400" height="1" fill="#124C22"/>
<rect x="117" y="418" width="400" height="1" fill="#124C22"/>
<rect x="117" y="438" width="400" height="1" fill="#124C22"/>
<rect x="117" y="57" width="211" height="1" fill="#2CAC52"/>
<rect x="327" y="39" width="1" height="19" fill="#95D4A6"/>
<rect x="327" y="39" width="190" height="1" fill="#2CAC52"/>
<rect x="117" y="59" width="51" height="1" fill="#2CAC52"/>
<rect x="167" y="59" width="1" height="19" fill="#95D4A6"/>
<rect x="167" y="77" width="111" height="1" fill="#2CAC52"/>
<rect x="277" y="59" width="1" height="19" fill="#95D4A6"/>
<rect x="277" y="59" width="240" height="1" fill="#2CAC52"/>
<rect x="117" y="97" width="400" height="1" fill="#2CAC52"/>
<rect x="117" y="117" width="400" height="1" fill="#2CAC52"/>
<rect x="117" y="137" width="400" height="1" fill="#2CAC52"/>
<rect x="117" y="157" width="400" height="1" fill="#2CAC52"/>
<rect x="117" y="177" width="400" height="1" fill="#2CAC52"/>
<rect x="117" y="197" width="400" height="1" fill="#2CAC52"/>
<rect x="117" y="217" width="400" height="1" fill="#2CAC52"/>
<rect x="117" y="237" width="400" height="1" fill="#2CAC52"/>
<rect x="117" y="257" width="400" height="1" fill="#2CAC52"/>
<rect x="117" y="277" width="400" height="1" fill="#2CAC52"/>
<rect x="117" y="297" width="400" height="1" fill="#2CAC52"/>
<rect x="117" y="317" width="400" height="1" fill="#2CAC52"/>
<rect x="117" y="337" width="400" height="1" fill="#2CAC52"/>
<rect x="117" y="357" width="400" height="1" fill="#2CAC52"/>
<rect x="117" y="359" width="400" height="1" fill="#2CAC52"/>
<rect x="117" y="377" width="400" height="1" fill="#2CAC52"/>
<text x="316.5" y="371" font-size="9" fill="#C4C4C4" text-anchor="middle">00</text>
<rect x="117" y="379" width="400" height="1" fill="#2CAC52"/>
<rect x="117" y="397" width="400" height="1" fill="#2CAC52"/>
<text x="316.5" y="391" font-size="9" fill="#C4C4C4" text-anchor="middle">00</text>
<rect x="117" y="399" width="400" height="1" fill="#2CAC52"/>
<rect x="117" y="417" width="400" height="1" fill="#2CAC52"/>
<text x="316.5" y="411" font-size="9" fill="#C4C4C4" text-anchor="middle">00</text>
<rect x="117" y="419" width="400" height="1" fill="#2CAC52"/>
<rect x="117" y="437" width="400" height="1" fill="#2CAC52"/>
<text x="316.5" y="431" font-size="9" fill="#C4C4C4" text-anchor="middle">00</text>
<rect x="454" y="165" width="63" height="13" fill="#000"/>
<text x="454.5" y="175" font-size="9" fill="#B8B8B8" textLength="62">12.53 mS 0003</text>
<rect x="93" y="442" width="427" height="16" fill="#F6F5EE"/>
<rect x="93" y="442" width="13" height="16" fill="#ECEADC"/>
<rect x="93" y="442" width="13" height="1" fill="#fff"/>
<rect x="93" y="442" width="1" height="16" fill="#fff"/>
<rect x="105" y="442" width="1" height="16" fill="#9A988A"/>
<rect x="93" y="457" width="13" height="1" fill="#9A988A"/>
<path d="M100.5 446.5V452.5L97 449.5Z" fill="#000"/>
<rect x="106" y="442" width="203" height="16" fill="#F4F3EA"/>
<rect x="106" y="442" width="203" height="1" fill="#fff"/>
<rect x="308" y="442" width="1" height="16" fill="#85857A"/>
<rect x="107" y="457" width="202" height="1" fill="#C8C6B8"/>
<rect x="507" y="442" width="13" height="16" fill="#ECE9D8"/>
<rect x="507" y="442" width="13" height="1" fill="#fff"/>
<rect x="507" y="442" width="1" height="16" fill="#fff"/>
<rect x="519" y="442" width="1" height="16" fill="#8A887A"/>
<rect x="507" y="457" width="13" height="1" fill="#8A887A"/>
<path d="M512 446.5V452.5L515.5 449.5Z" fill="#000"/>
<rect x="520" y="441" width="1" height="17" fill="#000"/>
<rect x="522" y="23" width="91" height="435" fill="#A9A9A9"/>
<rect x="522" y="96" width="91" height="1" fill="#000"/>
<rect x="522" y="97" width="91" height="1" fill="#F0F0F0"/>
<rect x="522" y="114" width="91" height="1" fill="#000"/>
<rect x="522" y="115" width="91" height="1" fill="#F0F0F0"/>
<rect x="522" y="225" width="91" height="1" fill="#000"/>
<rect x="522" y="226" width="91" height="1" fill="#F0F0F0"/>
<rect x="522" y="243" width="91" height="1" fill="#000"/>
<rect x="522" y="244" width="91" height="1" fill="#F0F0F0"/>
<text x="563.8" y="109.2" font-size="11.6" fill="#E38E98" text-anchor="middle" font-weight="bold">Trigger</text>
<text x="565.2" y="239.2" font-size="12.1" fill="#E2803A" text-anchor="middle" font-weight="bold">Horizontal</text>
<text x="588.5" y="136" font-size="9.4" fill="#2A2A2A" text-anchor="end">Capture</text>
<text x="588.5" y="154.3" font-size="9.4" fill="#2A2A2A" text-anchor="end">Cursors</text>
<text x="568" y="170.2" font-size="9.3" fill="#2A2A2A" text-anchor="middle">Position</text>
<text x="568" y="178" font-size="5" fill="#E09098" text-anchor="middle">Source</text>
<defs><radialGradient id="cb" cx="0.4" cy="0.4" r="0.7"><stop offset="0" stop-color="#989898"/><stop offset="1" stop-color="#2C2C2C"/></radialGradient><radialGradient id="ub" cx="0.4" cy="0.4" r="0.75"><stop offset="0" stop-color="#FFFFFF"/><stop offset="1" stop-color="#F49AAE"/></radialGradient><linearGradient id="pg" x1="0" y1="0" x2="1" y2="0"><stop offset="0" stop-color="#484848"/><stop offset="0.25" stop-color="#9A9A9A"/><stop offset="0.5" stop-color="#FFFFFF"/><stop offset="0.75" stop-color="#9A9A9A"/><stop offset="1" stop-color="#484848"/></linearGradient></defs>
<rect x="593" y="125" width="15" height="15" fill="#fff"/>
<rect x="594" y="126" width="14" height="14" fill="#000"/>
<rect x="594" y="126" width="13" height="13" fill="url(#cb)"/>
<rect x="593" y="144" width="15" height="15" fill="#fff"/>
<rect x="594" y="145" width="14" height="14" fill="#000"/>
<rect x="594" y="145" width="13" height="13" fill="url(#ub)"/>
<rect x="528" y="183" width="80" height="39" fill="#000"/>
<rect x="529" y="184" width="78" height="37" fill="#A9A9A9"/>
<rect x="530" y="189" width="75" height="1" fill="#F4F4F4"/>
<rect x="530" y="190" width="75" height="24" fill="url(#pg)"/>
<rect x="530" y="214" width="75" height="1" fill="#000"/>
<path d="M562 184H571L566.5 188.5Z" fill="#F01818"/><path d="M562 221H571L566.5 216.5Z" fill="#F01818"/>
<rect x="530" y="190" width="1" height="2" fill="#333"/>
<rect x="530" y="212" width="1" height="2" fill="#333"/>
<rect x="534" y="190" width="1" height="2" fill="#333"/>
<rect x="534" y="212" width="1" height="2" fill="#333"/>
<rect x="538" y="190" width="1" height="2" fill="#333"/>
<rect x="538" y="212" width="1" height="2" fill="#333"/>
<rect x="542" y="190" width="1" height="2" fill="#333"/>
<rect x="542" y="212" width="1" height="2" fill="#333"/>
<rect x="546" y="190" width="1" height="3" fill="#333"/>
<rect x="546" y="211" width="1" height="3" fill="#333"/>
<rect x="550" y="190" width="1" height="2" fill="#333"/>
<rect x="550" y="212" width="1" height="2" fill="#333"/>
<rect x="554" y="190" width="1" height="2" fill="#333"/>
<rect x="554" y="212" width="1" height="2" fill="#333"/>
<rect x="558" y="190" width="1" height="2" fill="#333"/>
<rect x="558" y="212" width="1" height="2" fill="#333"/>
<rect x="562" y="190" width="1" height="2" fill="#333"/>
<rect x="562" y="212" width="1" height="2" fill="#333"/>
<rect x="566" y="190" width="1" height="4" fill="#333"/>
<rect x="566" y="210" width="1" height="4" fill="#333"/>
<rect x="570" y="190" width="1" height="2" fill="#333"/>
<rect x="570" y="212" width="1" height="2" fill="#333"/>
<rect x="574" y="190" width="1" height="2" fill="#333"/>
<rect x="574" y="212" width="1" height="2" fill="#333"/>
<rect x="578" y="190" width="1" height="2" fill="#333"/>
<rect x="578" y="212" width="1" height="2" fill="#333"/>
<rect x="582" y="190" width="1" height="2" fill="#333"/>
<rect x="582" y="212" width="1" height="2" fill="#333"/>
<rect x="586" y="190" width="1" height="3" fill="#333"/>
<rect x="586" y="211" width="1" height="3" fill="#333"/>
<rect x="590" y="190" width="1" height="2" fill="#333"/>
<rect x="590" y="212" width="1" height="2" fill="#333"/>
<rect x="594" y="190" width="1" height="2" fill="#333"/>
<rect x="594" y="212" width="1" height="2" fill="#333"/>
<rect x="598" y="190" width="1" height="2" fill="#333"/>
<rect x="598" y="212" width="1" height="2" fill="#333"/>
<rect x="602" y="190" width="1" height="2" fill="#333"/>
<rect x="602" y="212" width="1" height="2" fill="#333"/>
<text x="546" y="205.2" font-size="9.5" fill="#000" text-anchor="middle" stroke="#000" stroke-width="0.2">5</text>
<text x="566.3" y="205.2" font-size="9.5" fill="#000" text-anchor="middle" stroke="#000" stroke-width="0.2">0</text>
<text x="585.5" y="205.2" font-size="9.5" fill="#000" text-anchor="middle" stroke="#000" stroke-width="0.2">-5</text>
<text x="567.5" y="256" font-size="9.2" fill="#2E2E2E" text-anchor="middle">Display Scale</text>
<text x="567.5" y="364" font-size="9.3" fill="#2E2E2E" text-anchor="middle">Capture Resolution</text>
<defs><linearGradient id="ko" x1="0.15" y1="0.1" x2="0.85" y2="0.9"><stop offset="0" stop-color="#DCDCDC"/><stop offset="0.5" stop-color="#B0B0B0"/><stop offset="1" stop-color="#8C8C8C"/></linearGradient><linearGradient id="ki" x1="0.1" y1="0.15" x2="0.9" y2="0.85"><stop offset="0" stop-color="#8C8C8C"/><stop offset="0.3" stop-color="#C8C8C8"/><stop offset="0.48" stop-color="#FFFFFF"/><stop offset="0.6" stop-color="#B4B4B4"/><stop offset="0.8" stop-color="#C8C8C8"/><stop offset="1" stop-color="#6E6E6E"/></linearGradient></defs>
<path d="M523.5 348.5V305A44 44 0 0 1 611.5 305V348.5H586V318H548.5V348.5Z" fill="#fff" stroke="#4A4A4A" stroke-width="1"/>
<rect x="549" y="314" width="37" height="35" fill="#A9A9A9"/>
<path d="M588.5 322.6L592.6 326.2" stroke="#3A3A3A" stroke-width="1"/>
<path d="M594.9 310.0L600.2 311.1" stroke="#3A3A3A" stroke-width="1"/>
<path d="M594.3 295.9L599.6 294.3" stroke="#3A3A3A" stroke-width="1"/>
<path d="M586.9 283.8L590.7 279.9" stroke="#3A3A3A" stroke-width="1"/>
<path d="M574.6 276.9L576.0 271.6" stroke="#3A3A3A" stroke-width="1"/>
<path d="M560.5 276.9L559.1 271.6" stroke="#3A3A3A" stroke-width="1"/>
<path d="M548.2 283.8L544.4 279.8" stroke="#3A3A3A" stroke-width="1"/>
<path d="M540.7 295.8L535.5 294.1" stroke="#3A3A3A" stroke-width="1"/>
<path d="M540.1 309.9L534.7 311.0" stroke="#3A3A3A" stroke-width="1"/>
<path d="M546.5 322.5L542.3 326.1" stroke="#3A3A3A" stroke-width="1"/>
<text x="599" y="334.8" font-size="7.6" fill="#222" text-anchor="middle">1x</text>
<text x="604.3" y="314.3" font-size="7.6" fill="#222" text-anchor="middle">2</text>
<text x="604.2" y="296.8" font-size="7.6" fill="#222" text-anchor="middle">5</text>
<text x="593.8" y="279.1" font-size="7.6" fill="#222" text-anchor="middle">10</text>
<text x="577.8" y="270.1" font-size="7.6" fill="#222" text-anchor="middle">20</text>
<text x="558.1" y="270.1" font-size="7.6" fill="#222" text-anchor="middle">50</text>
<text x="542.5" y="279.1" font-size="7.6" fill="#222" text-anchor="middle">100</text>
<text x="531.7" y="295.3" font-size="7.6" fill="#222" text-anchor="middle">200</text>
<text x="530.7" y="308.6" font-size="7.6" fill="#222" text-anchor="middle">500</text>
<text x="535.5" y="334.8" font-size="7.6" fill="#222" text-anchor="middle">1000x</text>
<circle cx="567.5" cy="304" r="29.6" fill="#5A5A5A"/>
<circle cx="567.5" cy="304.3" r="28.4" fill="url(#ko)"/>
<circle cx="567.4" cy="304.6" r="15.9" fill="#606060"/>
<circle cx="567.1" cy="304.2" r="14.4" fill="url(#ki)"/>
<path d="M588.3 303.8L592.4 314L584.2 314Z" fill="#E8781A"/>
<path d="M570.6 311L576.6 308V314Z" fill="#E8781A"/>
<rect x="549" y="335" width="37" height="13" fill="#000"/>
<rect x="550" y="336" width="36" height="12" fill="#fff"/>
<text x="552" y="344" font-size="9.6" fill="#0A0A60" letter-spacing="-0.3" stroke="#0A0A60" stroke-width="0.15">2.5u</text>
<path d="M523.5 456.5V413A44 44 0 0 1 611.5 413V456.5H586V425.5H548.5V456.5Z" fill="#fff" stroke="#4A4A4A" stroke-width="1"/>
<rect x="549" y="421.5" width="37" height="35.5" fill="#A9A9A9"/>
<path d="M582.7 388.0L592.0 373.8" stroke="#8E8E8E" stroke-width="2.2"/>
<path d="M548.3 431.9L544.5 435.9" stroke="#3A3A3A" stroke-width="1"/>
<path d="M543.4 425.8L538.7 428.6" stroke="#3A3A3A" stroke-width="1"/>
<path d="M540.4 418.5L535.1 419.9" stroke="#3A3A3A" stroke-width="1"/>
<path d="M539.5 410.7L534.0 410.6" stroke="#3A3A3A" stroke-width="1"/>
<path d="M540.8 403.0L535.6 401.3" stroke="#3A3A3A" stroke-width="1"/>
<path d="M544.2 395.9L539.7 392.9" stroke="#3A3A3A" stroke-width="1"/>
<path d="M549.5 390.1L545.9 385.9" stroke="#3A3A3A" stroke-width="1"/>
<path d="M556.1 385.9L553.9 380.9" stroke="#3A3A3A" stroke-width="1"/>
<path d="M563.7 383.8L562.9 378.3" stroke="#3A3A3A" stroke-width="1"/>
<path d="M571.5 383.8L572.3 378.3" stroke="#3A3A3A" stroke-width="1"/>
<path d="M579.0 386.0L581.3 381.0" stroke="#3A3A3A" stroke-width="1"/>
<path d="M585.6 390.2L589.2 386.0" stroke="#3A3A3A" stroke-width="1"/>
<path d="M590.8 396.0L595.4 393.0" stroke="#3A3A3A" stroke-width="1"/>
<path d="M594.2 403.1L599.5 401.5" stroke="#3A3A3A" stroke-width="1"/>
<path d="M595.5 410.9L601.0 410.7" stroke="#3A3A3A" stroke-width="1"/>
<path d="M594.6 418.7L599.9 420.1" stroke="#3A3A3A" stroke-width="1"/>
<path d="M591.5 425.9L596.2 428.7" stroke="#3A3A3A" stroke-width="1"/>
<path d="M586.6 432.0L590.3 436.0" stroke="#3A3A3A" stroke-width="1"/>
<text x="539.3" y="443.5" font-size="7.6" fill="#222" text-anchor="middle">200</text>
<text x="530.8" y="434.5" font-size="7.6" fill="#222" text-anchor="middle">100</text>
<text x="528.8" y="424.3" font-size="7.6" fill="#222" text-anchor="middle">50</text>
<text x="528.8" y="412.6" font-size="7.6" fill="#222" text-anchor="middle">20</text>
<text x="529.4" y="402.6" font-size="7.6" fill="#222" text-anchor="middle">10</text>
<text x="535.3" y="393.40000000000003" font-size="7.6" fill="#222" text-anchor="middle">5</text>
<text x="542.5" y="385.2" font-size="7.6" fill="#222" text-anchor="middle">2</text>
<text x="552.3" y="378.6" font-size="7.6" fill="#222" text-anchor="middle">1</text>
<text x="562.5" y="374.6" font-size="7.6" fill="#222" text-anchor="middle">0.5</text>
<text x="574" y="374.6" font-size="7.6" fill="#222" text-anchor="middle">0.2</text>
<text x="582" y="379.6" font-size="7.6" fill="#222" text-anchor="middle">0.1</text>
<text x="593.4" y="386.5" font-size="7.6" fill="#222" text-anchor="middle">50</text>
<text x="600.8" y="392.6" font-size="7.6" fill="#222" text-anchor="middle">20</text>
<text x="604.4" y="402.6" font-size="7.6" fill="#222" text-anchor="middle">10</text>
<text x="606.2" y="413.8" font-size="7.6" fill="#222" text-anchor="middle">5</text>
<text x="606.3" y="423.7" font-size="7.6" fill="#222" text-anchor="middle">2</text>
<text x="603.2" y="435.40000000000003" font-size="7.6" fill="#222" text-anchor="middle">1</text>
<text x="595.5" y="443.5" font-size="7.6" fill="#222" text-anchor="middle">0.5</text>
<circle cx="567.5" cy="411.5" r="29.6" fill="#5A5A5A"/>
<circle cx="567.5" cy="411.8" r="28.4" fill="url(#ko)"/>
<circle cx="567.8" cy="414.70000000000005" r="15.9" fill="#606060"/>
<circle cx="567.5" cy="414.3" r="14.4" fill="url(#ki)"/>
<path d="M554.5 387.3L564.8 392.5L554 397.2Z" fill="#E8781A"/>
<path d="M575.2 408.9L580.9 412.1L575.2 415.4Z" fill="#E8781A"/>
<rect x="549" y="443" width="37" height="13" fill="#000"/>
<rect x="550" y="444" width="36" height="12" fill="#fff"/>
<text x="552.5" y="452" font-size="9.6" fill="#0A0A60" letter-spacing="-0.3" stroke="#0A0A60" stroke-width="0.15">1.25u</text>
<text x="531.2" y="451.7" font-size="9" fill="#444" textLength="11.3" lengthAdjust="spacingAndGlyphs">µS</text>
<text x="593.9" y="451.7" font-size="9" fill="#444" textLength="10.8" lengthAdjust="spacingAndGlyphs">nS</text>
</svg>
</body></html>
